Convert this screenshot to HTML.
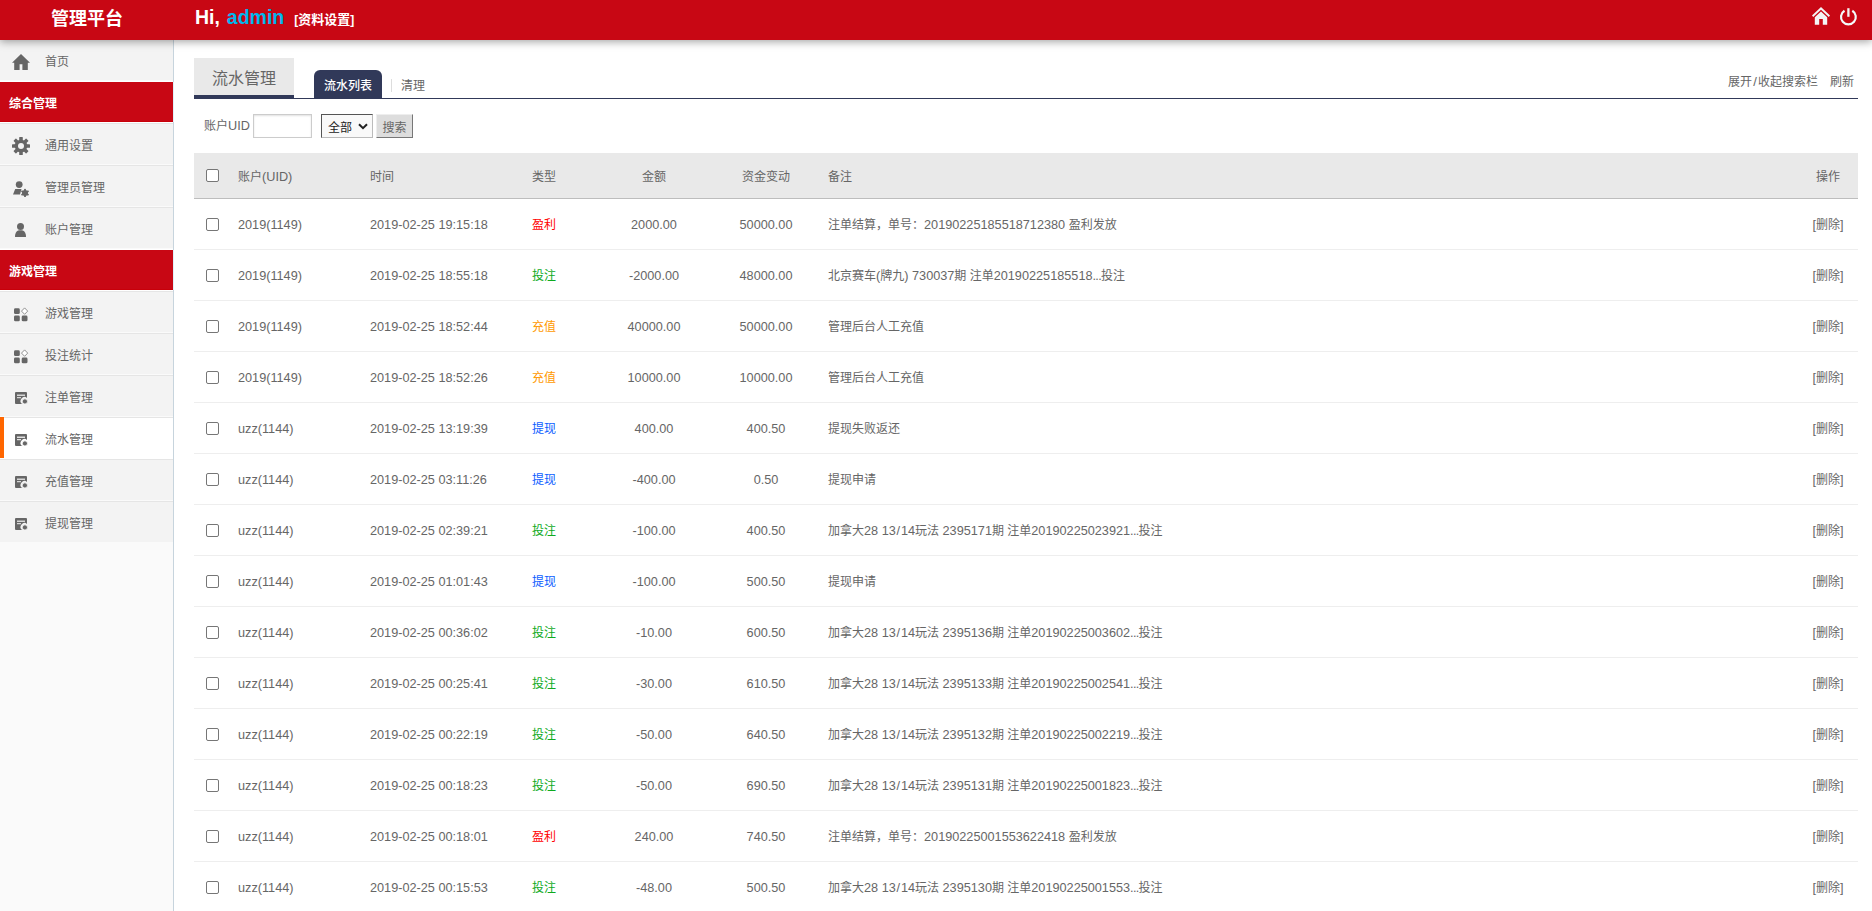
<!DOCTYPE html>
<html lang="zh-CN">
<head>
<meta charset="utf-8">
<title>管理平台</title>
<style>
*{box-sizing:border-box;margin:0;padding:0}
html,body{width:1872px;height:911px;overflow:hidden;background:#fff}
body{font-family:"Liberation Sans","Noto Sans CJK SC",sans-serif;font-size:12px;color:#666;position:relative}
a{color:inherit;text-decoration:none}
#hd{position:absolute;left:0;top:0;width:1872px;height:40px;background:#c80714;z-index:10;box-shadow:0 2px 8px rgba(0,0,0,.35)}
#hd .logo{position:absolute;left:0;top:0;width:174px;height:40px;line-height:39px;text-align:center;color:#fff;font-size:18px;font-weight:bold}
#hd .hi{position:absolute;left:195px;top:0;height:40px;line-height:35px;color:#fff;font-size:19.5px;word-spacing:1.5px;font-weight:bold;white-space:nowrap}
#hd .hi b{color:#00b7ee}
#hd .hi span{font-size:13px;margin-left:10px;position:relative;top:0px;word-spacing:0}
#hd .hi span i{font-style:normal;display:inline-block;width:4px;text-align:center;font-size:12px}
#hd svg{position:absolute}
#sb{position:absolute;left:0;top:39px;width:174px;height:872px;background:#fafafa;border-right:1px solid #c7d4dd}
#sb .it{height:42px;background:#f3f3f3;border-top:1px solid #e5e5e5;border-bottom:1px solid #fafafa;position:relative;line-height:44px;padding-left:45px;color:#666;font-size:12px}
#sb .it svg{position:absolute}
#sb .sec{height:42px;background:#c80714;color:#fff;font-weight:bold;font-size:12px;line-height:45px;padding-left:9px;border-top:1px solid #fff;border-bottom:1px solid #fff;box-shadow:inset 0 -1px 0 #c8000a;position:relative}
#sb .sec:after{content:"";position:absolute;right:-1px;top:0;width:1px;height:40px;background:#dff0f8}
#sb .it.on{background:#fff;border-bottom-color:#fff}
#sb .it.on:before{content:"";position:absolute;left:0;top:-1px;width:4px;height:41px;background:#ff6600}
#main{position:absolute;left:194px;top:40px;width:1664px}
#tabs{position:absolute;left:0;top:18px;width:1664px;height:41px;border-bottom:1px solid #313959}
#tabs h2{position:absolute;left:0;top:0;width:100px;height:41px;background:#e9e9e9;border-bottom:4px solid #313959;font-size:16px;font-weight:normal;color:#666;text-align:center;line-height:42px}
#tabs .t1{position:absolute;left:120px;top:12px;width:68px;height:29px;background:#313959;color:#fff;border-radius:6px 6px 0 0;text-align:center;line-height:33px;font-size:12px;font-weight:500}
#tabs .sep{position:absolute;left:197px;top:21px;width:1px;height:13px;background:#ddd}
#tabs .t2{position:absolute;left:207px;top:13px;line-height:31px;font-size:12px;color:#666}
#tabs .r{position:absolute;right:4px;top:8px;line-height:31px;font-size:12px;color:#666;white-space:nowrap}
#tabs .r span{margin-left:12px}
#tabs .r i{font-style:normal;display:inline-block;width:6px;text-align:center;font-size:13px}
#srch{position:absolute;left:0;top:74px;height:24px;width:600px;font-size:12px}
#srch .lb{position:absolute;left:10px;top:0;line-height:24px}
#srch .in{position:absolute;left:59px;top:0;width:59px;height:24px;border:1px solid #ccc;box-shadow:inset 0 1px 2px rgba(0,0,0,.12);background:#fff}
#srch .sl{position:absolute;left:127px;top:0;width:52px;height:24px;border:1px solid #555;border-right-color:#bbb;border-bottom-color:#bbb;background:#f9f9f9;color:#222;line-height:26px;padding-left:6px;font-size:12px}
#srch .sl svg{position:absolute;right:4px;top:8px}
#srch .bt{position:absolute;left:182px;top:0;width:37px;height:24px;background:#ddd;border:1px solid #eee;border-right-color:#777;border-bottom-color:#777;text-align:center;line-height:26px;color:#666}
table{position:absolute;left:0;top:113px;width:1664px;border-collapse:collapse;table-layout:fixed;font-size:12px;color:#666}
th{height:45px;background:#e9e9e9;font-weight:normal;border-bottom:1px solid #bdbdbd;text-align:left}
td{height:51px;border-bottom:1px solid #eee;text-align:left;white-space:nowrap;line-height:16px;padding-top:2px}
.l{font-size:12.7px;position:relative;top:0px}
  .d{letter-spacing:-.7px}
.s{padding:0 .8px}
td .cb{position:relative;top:0px}
.c0{width:44px;padding-left:12px}
.c1{width:132px}
.c2{width:162px}
.c3{width:66px}
.c4{width:112px;text-align:center}
th.c4,th.c5{text-align:center}
.c5{width:112px;text-align:center}
.c6{padding-left:6px}
.c7{width:60px;text-align:center}
th.c7{text-align:center}
.cb{display:block;width:13px;height:13px;border:1px solid #767676;border-radius:2px;background:#fff}
</style>
</head>
<body>
<div id="hd">
  <div class="logo">管理平台</div>
  <div class="hi">Hi, <b>admin</b><span><i>[</i>资料设置<i>]</i></span></div>
  <svg style="left:1812px;top:7px" width="18" height="18" viewBox="0 0 18 18"><path d="M9 0 L0 8.6 L1.2 10 L9 2.7 L16.8 10 L18 8.6 Z M9 4.4 L2.8 10.2 V17.8 H7.2 V12 H10.8 V17.8 H15.2 V10.2 Z" fill="#f4f4f4"/></svg>
  <svg style="left:1839px;top:8px" width="19" height="19" viewBox="0 0 19 19"><path d="M5.5 2.7 A7.4 7.4 0 1 0 13.3 2.7" fill="none" stroke="#f4fbfb" stroke-width="2.2"/><path d="M9.4 0.2 V8.8" stroke="#f4f4f4" stroke-width="2.3"/></svg>
</div>
<div id="sb">
  <div class="it"><svg style="left:12px;top:14px" width="18" height="16" viewBox="0 0 18 16"><path d="M9 0 L0 8.7 H2.2 V16 H7.6 V10.2 H10.4 V16 H15.8 V8.7 H18 Z" fill="#666"/></svg>首页</div>
  <div class="sec">综合管理</div>
  <div class="it"><svg style="left:12px;top:13px" width="18" height="18" viewBox="0 0 18 18"><g fill="#666"><circle cx="9" cy="9" r="6.3"/><rect x="7.2" y="0" width="3.6" height="18" rx=".6"/><rect x="7.2" y="0" width="3.6" height="18" rx=".6" transform="rotate(45 9 9)"/><rect x="7.2" y="0" width="3.6" height="18" rx=".6" transform="rotate(90 9 9)"/><rect x="7.2" y="0" width="3.6" height="18" rx=".6" transform="rotate(135 9 9)"/></g><circle cx="9" cy="9" r="3" fill="#f3f3f3"/></svg>通用设置</div>
  <div class="it"><svg style="left:13px;top:15px" width="16" height="16" viewBox="0 0 16 16"><g fill="#666"><circle cx="6.2" cy="3.6" r="3.4"/><path d="M2.2 8 H8.5 L7 13.5 H0 Z"/><circle cx="12" cy="12" r="3"/><rect x="11.1" y="7.9" width="1.8" height="8.2"/><rect x="11.1" y="7.9" width="1.8" height="8.2" transform="rotate(60 12 12)"/><rect x="11.1" y="7.9" width="1.8" height="8.2" transform="rotate(120 12 12)"/></g></svg>管理员管理</div>
  <div class="it"><svg style="left:15px;top:15px" width="11" height="14" viewBox="0 0 11 14"><g fill="#666"><circle cx="5.5" cy="3.6" r="3.5"/><path d="M0 14 C0 9 2 7.2 5.5 7.2 C9 7.2 11 9 11 14 Z"/></g></svg>账户管理</div>
  <div class="sec">游戏管理</div>
  <div class="it"><svg class="g4" style="left:14px;top:15px" width="15" height="15" viewBox="0 0 15 15"><g fill="#666"><rect x="0" y="1.3" width="5.8" height="5.8" rx="1.4"/><rect x="0" y="8.5" width="5.8" height="5.8" rx="1.4"/><rect x="7.7" y="8.5" width="5.8" height="5.8" rx="1.4"/></g><path d="M10.6 0.9 L13.7 4.1 L10.6 7.3 L7.5 4.1 Z" fill="#fff" stroke="#777" stroke-width=".8"/></svg>游戏管理</div>
  <div class="it"><svg class="g4" style="left:14px;top:15px" width="15" height="15" viewBox="0 0 15 15"><g fill="#666"><rect x="0" y="1.3" width="5.8" height="5.8" rx="1.4"/><rect x="0" y="8.5" width="5.8" height="5.8" rx="1.4"/><rect x="7.7" y="8.5" width="5.8" height="5.8" rx="1.4"/></g><path d="M10.6 0.9 L13.7 4.1 L10.6 7.3 L7.5 4.1 Z" fill="#fff" stroke="#777" stroke-width=".8"/></svg>投注统计</div>
  <div class="it"><svg style="left:15px;top:16px" width="13" height="13" viewBox="0 0 13 13"><path d="M1 0 H11 Q12 0 12 1 V6 A3.2 3.2 0 0 0 7 12 H1 Q0 12 0 11 V1 Q0 0 1 0 Z" fill="#666"/><rect x="2" y="2.6" width="8" height="1.2" fill="#f3f3f3"/><rect x="2" y="5.2" width="4" height="1" fill="#f3f3f3"/><circle cx="9.9" cy="9.4" r="2.6" fill="#666" stroke="#f3f3f3" stroke-width=".9"/></svg>注单管理</div>
  <div class="it on"><svg style="left:15px;top:16px" width="13" height="13" viewBox="0 0 13 13"><path d="M1 0 H11 Q12 0 12 1 V6 A3.2 3.2 0 0 0 7 12 H1 Q0 12 0 11 V1 Q0 0 1 0 Z" fill="#666"/><rect x="2" y="2.6" width="8" height="1.2" fill="#fff"/><rect x="2" y="5.2" width="4" height="1" fill="#fff"/><circle cx="9.9" cy="9.4" r="2.6" fill="#666" stroke="#fff" stroke-width=".9"/></svg>流水管理</div>
  <div class="it"><svg style="left:15px;top:16px" width="13" height="13" viewBox="0 0 13 13"><path d="M1 0 H11 Q12 0 12 1 V6 A3.2 3.2 0 0 0 7 12 H1 Q0 12 0 11 V1 Q0 0 1 0 Z" fill="#666"/><rect x="2" y="2.6" width="8" height="1.2" fill="#f3f3f3"/><rect x="2" y="5.2" width="4" height="1" fill="#f3f3f3"/><circle cx="9.9" cy="9.4" r="2.6" fill="#666" stroke="#f3f3f3" stroke-width=".9"/></svg>充值管理</div>
  <div class="it"><svg style="left:15px;top:16px" width="13" height="13" viewBox="0 0 13 13"><path d="M1 0 H11 Q12 0 12 1 V6 A3.2 3.2 0 0 0 7 12 H1 Q0 12 0 11 V1 Q0 0 1 0 Z" fill="#666"/><rect x="2" y="2.6" width="8" height="1.2" fill="#f3f3f3"/><rect x="2" y="5.2" width="4" height="1" fill="#f3f3f3"/><circle cx="9.9" cy="9.4" r="2.6" fill="#666" stroke="#f3f3f3" stroke-width=".9"/></svg>提现管理</div>
</div>
<div id="main">
  <div id="tabs">
    <h2>流水管理</h2>
    <div class="t1">流水列表</div>
    <div class="sep"></div>
    <div class="t2">清理</div>
    <div class="r"><span>展开<i>/</i>收起搜索栏</span><span>刷新</span></div>
  </div>
  <div id="srch">
    <div class="lb">账户<span class="l">UID</span></div>
    <div class="in"></div>
    <div class="sl">全部<svg width="10" height="7" viewBox="0 0 10 7"><path d="M1 1.2 L5 5.2 L9 1.2" fill="none" stroke="#222" stroke-width="2"/></svg></div>
    <div class="bt">搜索</div>
  </div>
  <table>
    <thead><tr><th class="c0"><span class="cb"></span></th><th class="c1">账户<span class="l">(UID)</span></th><th class="c2">时间</th><th class="c3">类型</th><th class="c4">金额</th><th class="c5">资金变动</th><th class="c6">备注</th><th class="c7">操作</th></tr></thead>
    <tbody>
<tr><td class="c0"><span class="cb"></span></td><td class="c1"><span class="l">2019(1149)</span></td><td class="c2"><span class="l">2019-02-25 19:15:18</span></td><td class="c3" style="color:#ff0000">盈利</td><td class="c4"><span class="l">2000.00</span></td><td class="c5"><span class="l">50000.00</span></td><td class="c6">注单结算，单号：<span class="l">20190225185518712380 </span>盈利发放</td><td class="c7"><span class="l">[</span>删除<span class="l">]</span></td></tr>
<tr><td class="c0"><span class="cb"></span></td><td class="c1"><span class="l">2019(1149)</span></td><td class="c2"><span class="l">2019-02-25 18:55:18</span></td><td class="c3" style="color:#0faa1e">投注</td><td class="c4"><span class="l">-2000.00</span></td><td class="c5"><span class="l">48000.00</span></td><td class="c6">北京赛车<span class="l">(</span>牌九<span class="l">) 730037</span>期 注单<span class="l">20190225185518<span class="d">...</span></span>投注</td><td class="c7"><span class="l">[</span>删除<span class="l">]</span></td></tr>
<tr><td class="c0"><span class="cb"></span></td><td class="c1"><span class="l">2019(1149)</span></td><td class="c2"><span class="l">2019-02-25 18:52:44</span></td><td class="c3" style="color:#ff9900">充值</td><td class="c4"><span class="l">40000.00</span></td><td class="c5"><span class="l">50000.00</span></td><td class="c6">管理后台人工充值</td><td class="c7"><span class="l">[</span>删除<span class="l">]</span></td></tr>
<tr><td class="c0"><span class="cb"></span></td><td class="c1"><span class="l">2019(1149)</span></td><td class="c2"><span class="l">2019-02-25 18:52:26</span></td><td class="c3" style="color:#ff9900">充值</td><td class="c4"><span class="l">10000.00</span></td><td class="c5"><span class="l">10000.00</span></td><td class="c6">管理后台人工充值</td><td class="c7"><span class="l">[</span>删除<span class="l">]</span></td></tr>
<tr><td class="c0"><span class="cb"></span></td><td class="c1"><span class="l">uzz(1144)</span></td><td class="c2"><span class="l">2019-02-25 13:19:39</span></td><td class="c3" style="color:#0a5cff">提现</td><td class="c4"><span class="l">400.00</span></td><td class="c5"><span class="l">400.50</span></td><td class="c6">提现失败返还</td><td class="c7"><span class="l">[</span>删除<span class="l">]</span></td></tr>
<tr><td class="c0"><span class="cb"></span></td><td class="c1"><span class="l">uzz(1144)</span></td><td class="c2"><span class="l">2019-02-25 03:11:26</span></td><td class="c3" style="color:#0a5cff">提现</td><td class="c4"><span class="l">-400.00</span></td><td class="c5"><span class="l">0.50</span></td><td class="c6">提现申请</td><td class="c7"><span class="l">[</span>删除<span class="l">]</span></td></tr>
<tr><td class="c0"><span class="cb"></span></td><td class="c1"><span class="l">uzz(1144)</span></td><td class="c2"><span class="l">2019-02-25 02:39:21</span></td><td class="c3" style="color:#0faa1e">投注</td><td class="c4"><span class="l">-100.00</span></td><td class="c5"><span class="l">400.50</span></td><td class="c6">加拿大<span class="l">28 13<span class="s">/</span>14</span>玩法<span class="l"> 2395171</span>期 注单<span class="l">20190225023921<span class="d">...</span></span>投注</td><td class="c7"><span class="l">[</span>删除<span class="l">]</span></td></tr>
<tr><td class="c0"><span class="cb"></span></td><td class="c1"><span class="l">uzz(1144)</span></td><td class="c2"><span class="l">2019-02-25 01:01:43</span></td><td class="c3" style="color:#0a5cff">提现</td><td class="c4"><span class="l">-100.00</span></td><td class="c5"><span class="l">500.50</span></td><td class="c6">提现申请</td><td class="c7"><span class="l">[</span>删除<span class="l">]</span></td></tr>
<tr><td class="c0"><span class="cb"></span></td><td class="c1"><span class="l">uzz(1144)</span></td><td class="c2"><span class="l">2019-02-25 00:36:02</span></td><td class="c3" style="color:#0faa1e">投注</td><td class="c4"><span class="l">-10.00</span></td><td class="c5"><span class="l">600.50</span></td><td class="c6">加拿大<span class="l">28 13<span class="s">/</span>14</span>玩法<span class="l"> 2395136</span>期 注单<span class="l">20190225003602<span class="d">...</span></span>投注</td><td class="c7"><span class="l">[</span>删除<span class="l">]</span></td></tr>
<tr><td class="c0"><span class="cb"></span></td><td class="c1"><span class="l">uzz(1144)</span></td><td class="c2"><span class="l">2019-02-25 00:25:41</span></td><td class="c3" style="color:#0faa1e">投注</td><td class="c4"><span class="l">-30.00</span></td><td class="c5"><span class="l">610.50</span></td><td class="c6">加拿大<span class="l">28 13<span class="s">/</span>14</span>玩法<span class="l"> 2395133</span>期 注单<span class="l">20190225002541<span class="d">...</span></span>投注</td><td class="c7"><span class="l">[</span>删除<span class="l">]</span></td></tr>
<tr><td class="c0"><span class="cb"></span></td><td class="c1"><span class="l">uzz(1144)</span></td><td class="c2"><span class="l">2019-02-25 00:22:19</span></td><td class="c3" style="color:#0faa1e">投注</td><td class="c4"><span class="l">-50.00</span></td><td class="c5"><span class="l">640.50</span></td><td class="c6">加拿大<span class="l">28 13<span class="s">/</span>14</span>玩法<span class="l"> 2395132</span>期 注单<span class="l">20190225002219<span class="d">...</span></span>投注</td><td class="c7"><span class="l">[</span>删除<span class="l">]</span></td></tr>
<tr><td class="c0"><span class="cb"></span></td><td class="c1"><span class="l">uzz(1144)</span></td><td class="c2"><span class="l">2019-02-25 00:18:23</span></td><td class="c3" style="color:#0faa1e">投注</td><td class="c4"><span class="l">-50.00</span></td><td class="c5"><span class="l">690.50</span></td><td class="c6">加拿大<span class="l">28 13<span class="s">/</span>14</span>玩法<span class="l"> 2395131</span>期 注单<span class="l">20190225001823<span class="d">...</span></span>投注</td><td class="c7"><span class="l">[</span>删除<span class="l">]</span></td></tr>
<tr><td class="c0"><span class="cb"></span></td><td class="c1"><span class="l">uzz(1144)</span></td><td class="c2"><span class="l">2019-02-25 00:18:01</span></td><td class="c3" style="color:#ff0000">盈利</td><td class="c4"><span class="l">240.00</span></td><td class="c5"><span class="l">740.50</span></td><td class="c6">注单结算，单号：<span class="l">20190225001553622418 </span>盈利发放</td><td class="c7"><span class="l">[</span>删除<span class="l">]</span></td></tr>
<tr><td class="c0"><span class="cb"></span></td><td class="c1"><span class="l">uzz(1144)</span></td><td class="c2"><span class="l">2019-02-25 00:15:53</span></td><td class="c3" style="color:#0faa1e">投注</td><td class="c4"><span class="l">-48.00</span></td><td class="c5"><span class="l">500.50</span></td><td class="c6">加拿大<span class="l">28 13<span class="s">/</span>14</span>玩法<span class="l"> 2395130</span>期 注单<span class="l">20190225001553<span class="d">...</span></span>投注</td><td class="c7"><span class="l">[</span>删除<span class="l">]</span></td></tr>
    </tbody>
  </table>
</div>
</body>
</html>
